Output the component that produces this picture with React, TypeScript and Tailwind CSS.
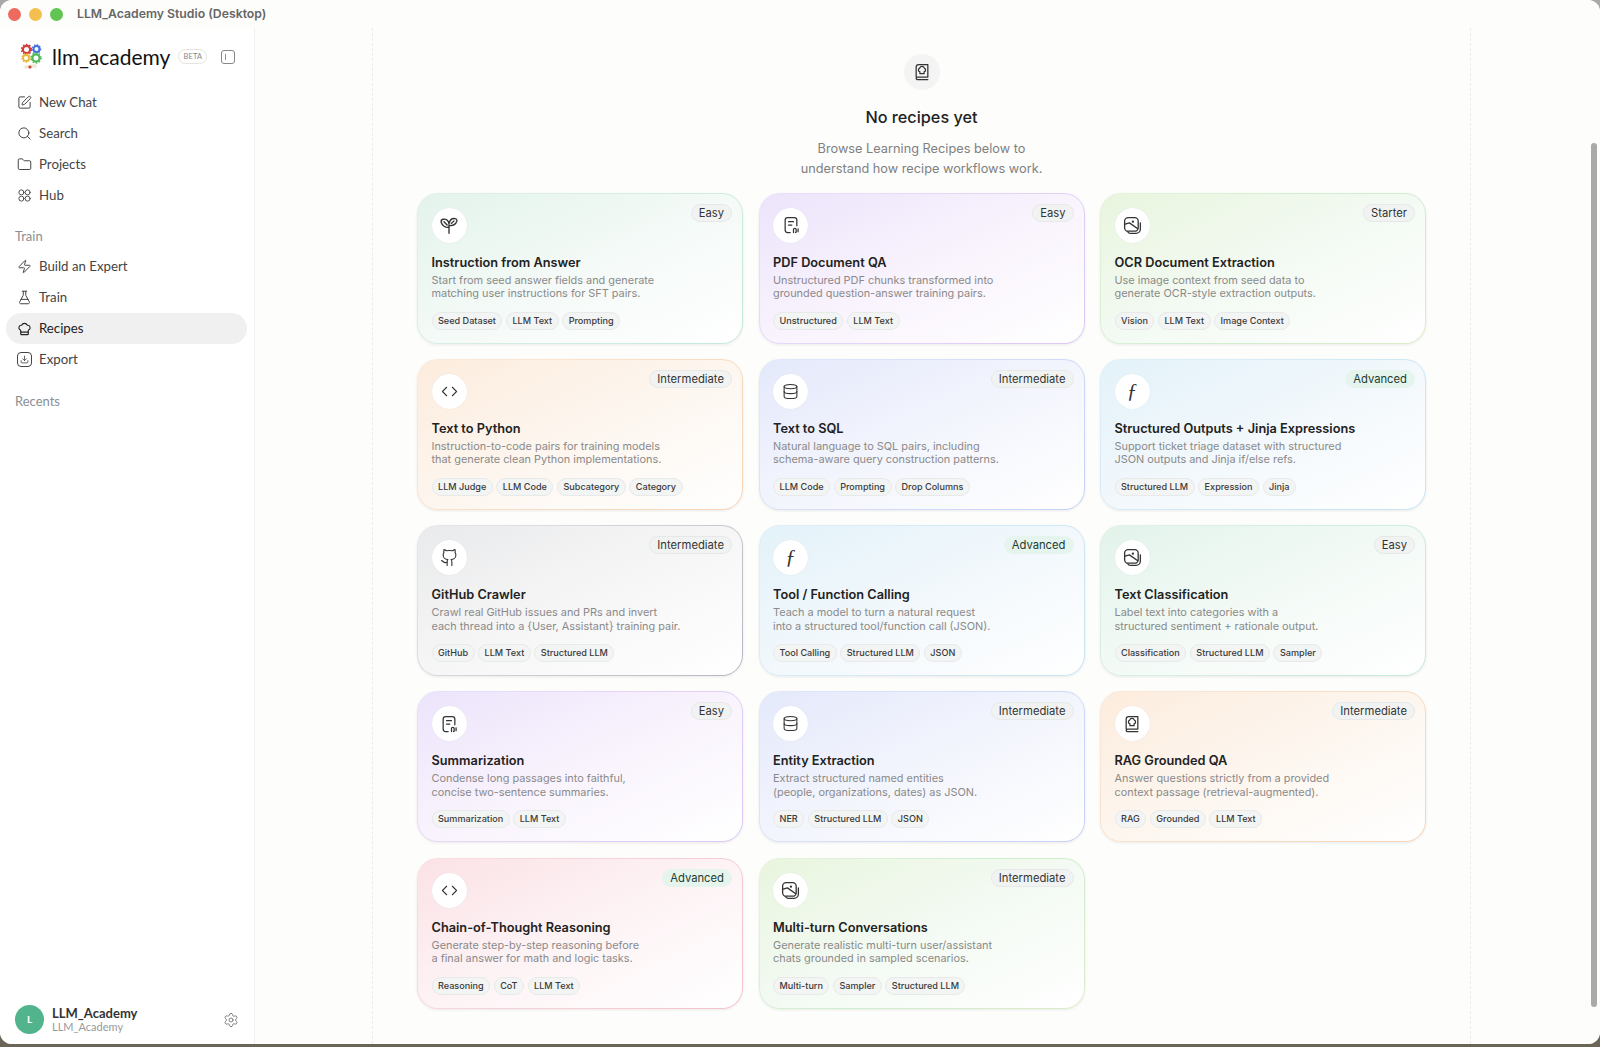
import {
  ChefHat,
  Code,
  Database,
  Download,
  FlaskConical,
  Folder,
  Github,
  Search,
  Settings,
  SquarePen,
  Zap,
} from "lucide-react"
import type { ReactNode } from "react"

const SIDE_FONT = "font-['Lato','Noto_Sans',sans-serif]"
const CARD_FONT = "font-['Inter','Noto_Sans',sans-serif]"

function SvgIcon({ children, size = 20 }: { children: ReactNode; size?: number }) {
  return (
    <svg
      width={size}
      height={size}
      viewBox="0 0 24 24"
      fill="none"
      stroke="currentColor"
      strokeWidth="1.5"
      strokeLinecap="round"
      strokeLinejoin="round"
    >
      {children}
    </svg>
  )
}

function SproutIcon() {
  return (
    <SvgIcon size={22}>
      <path d="M12 21v-9" />
      <path d="M11.500 14.500C9 15 4.500 13.500 3.500 9c-.3-1.500.5-3 2-3.300 3.500-.7 6 1.500 6.500 5" />
      <path d="M12.500 12.500c3 .5 6.500-.5 8-4.500.5-1.500-.3-2.800-1.800-3-3.200-.4-5.700 1.500-6.200 4.500" />
      <path d="M6.500 8.500l3.500 3.500" />
      <path d="M17.500 7.500l-3 3" />
    </SvgIcon>
  )
}

function PdfIcon() {
  return (
    <SvgIcon>
      <path d="M11 21H8a3 3 0 0 1-3-3V6a3 3 0 0 1 3-3h8a3 3 0 0 1 3 3v7" />
      <path d="M9 8h6" />
      <path d="M9 12h4" />
      <path d="M15 21v-3.500a1.600 1.600 0 0 1 3.200 0V20a.8.8 0 0 1-.8 1" />
      <path d="M20.500 16.500V20" />
    </SvgIcon>
  )
}

function StackIcon() {
  return (
    <SvgIcon size={21}>
      <rect x="3" y="3" width="15.500" height="15.500" rx="4" />
      <path d="M21 9v7a5 5 0 0 1-5 5H9.500a3.500 3.500 0 0 1-3-1.800" />
      <path d="M3.500 10.500l5-1.500 9.500 6.800" />
      <circle cx="12.500" cy="7.500" r=".6" />
    </SvgIcon>
  )
}

function BookHatIcon({ size = 20 }: { size?: number }) {
  return (
    <SvgIcon size={size}>
      <path d="M5 18V6a3 3 0 0 1 3-3h11v15H7a2 2 0 0 0-2 2 2 2 0 0 0 2 1h12" />
      <path d="M9.500 14h5v-2.200a2.300 2.300 0 0 0 .3-4.400 2.900 2.900 0 0 0-5.600 0 2.300 2.300 0 0 0 .3 4.400Z" />
    </SvgIcon>
  )
}

function HubIcon() {
  return (
    <SvgIcon size={15}>
      <circle cx="7" cy="7" r="4" />
      <circle cx="17" cy="7" r="4" />
      <circle cx="7" cy="17" r="4" />
      <circle cx="17" cy="17" r="4" />
    </SvgIcon>
  )
}

function ExportIcon() {
  return (
    <span className="relative flex h-[15px] w-[15px] items-center justify-center rounded-[4px] border-[1.4px] border-current">
      <Download size={9} strokeWidth={2.2} />
    </span>
  )
}

function PanelIcon() {
  return (
    <svg width="14" height="14" viewBox="0 0 14 14" fill="none" stroke="currentColor" strokeWidth="1">
      <rect x="0.500" y="0.500" width="13" height="13" rx="2.500" />
      <path d="M4.500 4.500v5" strokeLinecap="round" />
    </svg>
  )
}

function Logo() {
  return (
    <svg width="24" height="28" viewBox="0 0 24 28" fill="none">
      <circle cx="7.500" cy="6.500" r="3.600" stroke="#d63a3a" strokeWidth="2.200" />
      <circle cx="7.500" cy="6.500" r="5" stroke="#d63a3a" strokeWidth="1.400" strokeDasharray="1.600 1.600" />
      <circle cx="17.500" cy="6" r="3" stroke="#3f6fe0" strokeWidth="1.900" />
      <circle cx="17.500" cy="6" r="4.200" stroke="#3f6fe0" strokeWidth="1.200" strokeDasharray="1.400 1.400" />
      <circle cx="7" cy="15" r="3" stroke="#e8b93c" strokeWidth="1.900" />
      <circle cx="7" cy="15" r="4.200" stroke="#e8b93c" strokeWidth="1.200" strokeDasharray="1.400 1.400" />
      <circle cx="17" cy="15" r="3.600" stroke="#4fb956" strokeWidth="2.200" />
      <circle cx="17" cy="15" r="5" stroke="#4fb956" strokeWidth="1.400" strokeDasharray="1.600 1.600" />
      <path d="M5 23.500c3-2 9-2.500 13-2l-1 3.500c-4-.5-8 .5-11 1Z" fill="#efe6d4" />
      <circle cx="11" cy="24" r="1.600" fill="#c8413b" />
    </svg>
  )
}

const navTop = [
  { label: "New Chat", icon: <SquarePen size={15} strokeWidth={1.6} /> },
  { label: "Search", icon: <Search size={15} strokeWidth={1.6} /> },
  { label: "Projects", icon: <Folder size={15} strokeWidth={1.6} /> },
  { label: "Hub", icon: <HubIcon /> },
]

const navTrain = [
  { label: "Build an Expert", icon: <Zap size={15} strokeWidth={1.6} /> },
  { label: "Train", icon: <FlaskConical size={15} strokeWidth={1.6} /> },
  { label: "Recipes", icon: <ChefHat size={16} strokeWidth={1.8} />, active: true },
  { label: "Export", icon: <ExportIcon /> },
]

function NavItem({ label, icon, active }: { label: string; icon: ReactNode; active?: boolean }) {
  return (
    <div
      className={
        active
          ? "flex h-[31px] items-center gap-[7px] rounded-full bg-[#f0f0f0] pl-[11px] text-[13.25px] text-[#222]"
          : "flex h-[31px] items-center gap-[7px] rounded-full pl-[11px] text-[13.25px] text-[#444]"
      }
    >
      <span className="flex w-[15px] justify-center">{icon}</span>
      {label}
    </div>
  )
}

function Sidebar() {
  return (
    <aside className={`flex w-[255px] shrink-0 flex-col border-r border-[#f0f0ef] bg-white ${SIDE_FONT}`}>
      <div className="mt-[12px] flex h-[33px] items-center pl-[19px]">
        <Logo />
        <span className="ml-[9px] text-[21px] leading-none text-[#111]">llm_academy</span>
        <span className="ml-[8px] rounded-full border border-[#e6e3dc] px-[4px] py-[1px] text-[7.5px] leading-[11px] tracking-wide text-[#888]">
          BETA
        </span>
        <span className="ml-[14px] text-[#888]">
          <PanelIcon />
        </span>
      </div>
      <nav className="ml-[6px] mr-[7.5px] mt-[14px] flex flex-col">
        {navTop.map((n) => (
          <NavItem key={n.label} {...n} />
        ))}
      </nav>
      <div className="mt-[15px] mb-[5px] pl-[15px] text-[13px] leading-[20px] text-[#8b8e94]">Train</div>
      <nav className="ml-[6px] mr-[7.5px] flex flex-col">
        {navTrain.map((n) => (
          <NavItem key={n.label} {...n} />
        ))}
      </nav>
      <div className="mt-[16px] pl-[15px] text-[13px] leading-[20px] text-[#8b8e94]">Recents</div>
      <div className="mt-auto mb-[10px] flex items-center pl-[15px] pr-[15px]">
        <span className="flex h-[29px] w-[29px] items-center justify-center rounded-full bg-[#52b48c] text-[10px] font-bold text-white">
          L
        </span>
        <div className="ml-[8px] flex flex-col">
          <span className="text-[13px] font-bold leading-[14px] text-[#333]">LLM_Academy</span>
          <span className="text-[11px] leading-[13px] text-[#999]">LLM_Academy</span>
        </div>
        <span className="ml-auto text-[#777]">
          <Settings size={16} strokeWidth={1.4} />
        </span>
      </div>
    </aside>
  )
}

const fn = <span className="font-['Liberation_Serif',serif] text-[21px] italic leading-none">ƒ</span>
const code = <Code size={17} strokeWidth={1.5} />
const db = <Database size={17} strokeWidth={1.5} />

const tones = {
  green: { border: "bg-[linear-gradient(135deg,#e3f1ea,#c4ead8)]", fill: "bg-[linear-gradient(155deg,#e3f3eb_0%,#f4faf7_50%,#ffffff_100%)]" },
  purple: { border: "bg-[linear-gradient(135deg,#ebe1fa,#dcc8f8)]", fill: "bg-[linear-gradient(155deg,#ece4fb_0%,#f9f3fd_50%,#ffffff_100%)]" },
  lime: { border: "bg-[linear-gradient(135deg,#e8f3dc,#cfeed0_50%,#dcecc8)]", fill: "bg-[linear-gradient(155deg,#e9f5de_0%,#f3faf3_50%,#ffffff_100%)]" },
  orange: { border: "bg-[linear-gradient(135deg,#fbeadb,#f7d4b4)]", fill: "bg-[linear-gradient(155deg,#fcecdd_0%,#fdf6ef_50%,#ffffff_100%)]" },
  indigo: { border: "bg-[linear-gradient(135deg,#e3e8fa,#c6d2fb)]", fill: "bg-[linear-gradient(155deg,#e4e9fb_0%,#f3f5fd_50%,#ffffff_100%)]" },
  sky: { border: "bg-[linear-gradient(135deg,#e0f0f8,#c6e4f5)]", fill: "bg-[linear-gradient(155deg,#e3f2f9_0%,#f2f8fc_50%,#ffffff_100%)]" },
  gray: { border: "bg-[linear-gradient(135deg,#e8e9ea,#b4b8c0)]", fill: "bg-[linear-gradient(155deg,#e9eaeb_0%,#f6f6f7_50%,#ffffff_100%)]" },
  teal: { border: "bg-[linear-gradient(135deg,#e2f2ea,#c4ead8)]", fill: "bg-[linear-gradient(155deg,#e2f3ea_0%,#f3faf6_50%,#ffffff_100%)]" },
  pink: { border: "bg-[linear-gradient(135deg,#fbdfe3,#f6c3cc)]", fill: "bg-[linear-gradient(155deg,#fbe2e6_0%,#fdf3f5_50%,#ffffff_100%)]" },
}

type Recipe = {
  title: string
  lines: [string, string]
  level: string
  tags: string[]
  tone: keyof typeof tones
  icon: ReactNode
}

const recipes: Recipe[] = [
  { title: "Instruction from Answer", lines: ["Start from seed answer fields and generate", "matching user instructions for SFT pairs."], level: "Easy", tags: ["Seed Dataset", "LLM Text", "Prompting"], tone: "green", icon: <SproutIcon /> },
  { title: "PDF Document QA", lines: ["Unstructured PDF chunks transformed into", "grounded question-answer training pairs."], level: "Easy", tags: ["Unstructured", "LLM Text"], tone: "purple", icon: <PdfIcon /> },
  { title: "OCR Document Extraction", lines: ["Use image context from seed data to", "generate OCR-style extraction outputs."], level: "Starter", tags: ["Vision", "LLM Text", "Image Context"], tone: "lime", icon: <StackIcon /> },
  { title: "Text to Python", lines: ["Instruction-to-code pairs for training models", "that generate clean Python implementations."], level: "Intermediate", tags: ["LLM Judge", "LLM Code", "Subcategory", "Category"], tone: "orange", icon: code },
  { title: "Text to SQL", lines: ["Natural language to SQL pairs, including", "schema-aware query construction patterns."], level: "Intermediate", tags: ["LLM Code", "Prompting", "Drop Columns"], tone: "indigo", icon: db },
  { title: "Structured Outputs + Jinja Expressions", lines: ["Support ticket triage dataset with structured", "JSON outputs and Jinja if/else refs."], level: "Advanced", tags: ["Structured LLM", "Expression", "Jinja"], tone: "sky", icon: fn },
  { title: "GitHub Crawler", lines: ["Crawl real GitHub issues and PRs and invert", "each thread into a {User, Assistant} training pair."], level: "Intermediate", tags: ["GitHub", "LLM Text", "Structured LLM"], tone: "gray", icon: <Github size={19} strokeWidth={1.4} /> },
  { title: "Tool / Function Calling", lines: ["Teach a model to turn a natural request", "into a structured tool/function call (JSON)."], level: "Advanced", tags: ["Tool Calling", "Structured LLM", "JSON"], tone: "sky", icon: fn },
  { title: "Text Classification", lines: ["Label text into categories with a", "structured sentiment + rationale output."], level: "Easy", tags: ["Classification", "Structured LLM", "Sampler"], tone: "teal", icon: <StackIcon /> },
  { title: "Summarization", lines: ["Condense long passages into faithful,", "concise two-sentence summaries."], level: "Easy", tags: ["Summarization", "LLM Text"], tone: "purple", icon: <PdfIcon /> },
  { title: "Entity Extraction", lines: ["Extract structured named entities", "(people, organizations, dates) as JSON."], level: "Intermediate", tags: ["NER", "Structured LLM", "JSON"], tone: "indigo", icon: db },
  { title: "RAG Grounded QA", lines: ["Answer questions strictly from a provided", "context passage (retrieval-augmented)."], level: "Intermediate", tags: ["RAG", "Grounded", "LLM Text"], tone: "orange", icon: <BookHatIcon /> },
  { title: "Chain-of-Thought Reasoning", lines: ["Generate step-by-step reasoning before", "a final answer for math and logic tasks."], level: "Advanced", tags: ["Reasoning", "CoT", "LLM Text"], tone: "pink", icon: code },
  { title: "Multi-turn Conversations", lines: ["Generate realistic multi-turn user/assistant", "chats grounded in sampled scenarios."], level: "Intermediate", tags: ["Multi-turn", "Sampler", "Structured LLM"], tone: "lime", icon: <StackIcon /> },
]

function RecipeCard({ recipe }: { recipe: Recipe }) {
  const tone = tones[recipe.tone]
  return (
    <div className={`rounded-[21px] p-px shadow-[0_1px_3px_rgba(0,0,0,0.08)] ${tone.border}`}>
      <div className={`relative flex h-[149px] flex-col rounded-[20px] px-[13.5px] pt-[14px] ${tone.fill}`}>
        <span
          className={
            recipe.level === "Advanced"
              ? "absolute right-[10px] top-[10px] rounded-full bg-[#e6f4ee] px-[8px] text-[11.25px] leading-[18px] text-[#1d3d30]"
              : "absolute right-[10px] top-[10px] rounded-full border border-[#e7e9e9] bg-[#f1f3f3] px-[7px] text-[11.25px] leading-[16px] text-[#333]"
          }
        >
          {recipe.level}
        </span>
        <div className="flex h-[35px] w-[35px] items-center justify-center rounded-full bg-white text-[#333] shadow-[0_0_1px_rgba(0,0,0,0.1)]">
          {recipe.icon}
        </div>
        <h3 className="mt-[11px] text-[12.75px] font-semibold leading-[18px] text-[#222]">{recipe.title}</h3>
        <p className="mt-[2px] text-[10.9px] leading-[13.5px] text-[#8a8a8a]">
          {recipe.lines[0]}
          <br />
          {recipe.lines[1]}
        </p>
        <div className="mt-[11px] flex gap-[3.5px]">
          {recipe.tags.map((t) => (
            <span
              key={t}
              className="rounded-full border border-[#e8eaea] bg-[#f3f4f4] px-[5.5px] text-[9.1px] font-medium leading-[16px] text-[#3a3a3a]"
            >
              {t}
            </span>
          ))}
        </div>
      </div>
    </div>
  )
}

function Main() {
  return (
    <main className={`flex-1 overflow-hidden bg-[#fdfdfc] ${CARD_FONT}`}>
      <div className="ml-[117px] h-full w-[1099px] border-x border-dashed border-[#ececea] px-[44px] pt-[26px]">
        <div className="flex flex-col items-center">
          <div className="flex h-[36px] w-[36px] items-center justify-center rounded-full bg-[#f4f4f4] text-[#333]">
            <BookHatIcon size={20} />
          </div>
          <h2 className="mt-[15px] text-[16.25px] font-medium leading-[24px] text-[#222]">No recipes yet</h2>
          <p className="mt-[10px] text-center text-[12.75px] leading-[20px] text-[#808080]">
            Browse Learning Recipes below to
            <br />
            understand how recipe workflows work.
          </p>
        </div>
        <div className="mt-[13.5px] grid grid-cols-3 gap-x-[15.5px] gap-y-[15.25px]">
          {recipes.map((r) => (
            <RecipeCard key={r.title} recipe={r} />
          ))}
        </div>
      </div>
    </main>
  )
}

export default function App() {
  return (
    <div className="h-[1047px] w-[1600px] overflow-hidden bg-[linear-gradient(180deg,#a9a9ab_0%,#8a8880_50%,#6b6558_100%)]">
      <div className="relative flex h-[1044px] w-[1600px] flex-col overflow-hidden rounded-[12px] bg-[#fdfdfc]">
        <div className="flex h-[28px] shrink-0 items-center bg-[#fdfdfc] pl-[8px]">
          <span className="h-[13px] w-[13px] rounded-full bg-[#ed6a5e]" />
          <span className="ml-[8px] h-[13px] w-[13px] rounded-full bg-[#f5bf4f]" />
          <span className="ml-[8px] h-[13px] w-[13px] rounded-full bg-[#61c554]" />
          <span className="ml-[14px] font-['Inter',sans-serif] text-[12.25px] font-semibold text-[#666]">
            LLM_Academy Studio (Desktop)
          </span>
        </div>
        <div className="flex min-h-0 flex-1">
          <Sidebar />
          <Main />
        </div>
        <div className="absolute bottom-[37px] right-[3px] top-[143px] w-[6px] rounded-full bg-[#aaaaaa]" />
      </div>
    </div>
  )
}
